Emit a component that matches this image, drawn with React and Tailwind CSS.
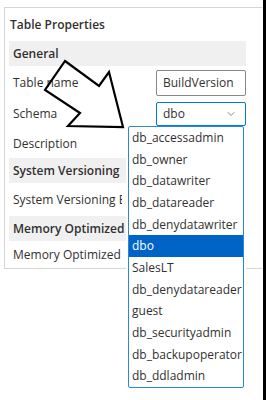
import { ChevronDown } from "lucide-react";

const schemas = [
  "db_accessadmin",
  "db_owner",
  "db_datawriter",
  "db_datareader",
  "db_denydatawriter",
  "dbo",
  "SalesLT",
  "db_denydatareader",
  "guest",
  "db_securityadmin",
  "db_backupoperator",
  "db_ddladmin",
];

function Section({ title }) {
  return (
    <div className="h-[25px] shrink-0 bg-[#f0f0f0] flex items-center pl-[4px] font-semibold text-[12px] text-[#323130]">
      {title}
    </div>
  );
}

function Row({ label, h, clip, children }) {
  return (
    <div className={"shrink-0 flex items-center justify-between pl-[4px] text-[12px] text-[#323130] " + h}>
      <span className={"whitespace-nowrap " + (clip ? "w-[109px] overflow-hidden" : "")}>{label}</span>
      {children}
    </div>
  );
}

export default function App() {
  return (
    <div className="relative w-[266px] h-[400px] bg-white overflow-hidden" style={{ fontFamily: '"Open Sans", "Noto Sans", sans-serif' }}>
      {/* right black edge */}
      <div className="absolute top-0 right-0 w-[3px] h-full bg-black" />

      {/* properties panel */}
      <div className="ml-[4px] mt-[7px] w-[258px] h-[262px] border-t border-l border-b border-[#d6d6d6] pl-[4px] flex flex-col">
        <div className="h-[33px] shrink-0 flex items-center pl-[1px] font-semibold text-[12px] text-[#323130]">Table Properties</div>
        <div className="w-[237px] flex flex-col">
          <Section title="General" />
          <Row label="Table name" h="h-[33px]">
            <div className="w-[90px] h-[26px] border border-[#8a8886] rounded-[2px] flex items-center px-[6px] text-[12px]">BuildVersion</div>
          </Row>
          <Row label="Schema" h="h-[30px]">
            <div className="w-[90px] h-[24px] border border-[#0078d4] rounded-[2px] flex items-center justify-between px-[6px] text-[12px]">
              dbo
              <ChevronDown size={12} strokeWidth={1.5} className="text-[#605e5c] mr-[2px]" />
            </div>
          </Row>
          <Row label="Description" h="h-[29px]" />
          <Section title="System Versioning" />
          <Row label="System Versioning Enabled" h="h-[33px]" clip />
          <Section title="Memory Optimized" />
          <Row label="Memory Optimized" h="h-[27px]" />
        </div>
      </div>

      {/* schema dropdown list */}
      <div className="absolute left-[126px] top-[126px] w-[120px] bg-white px-[2px]">
        <div className="border border-[#2b88d8] rounded-[2px] bg-white">
          {schemas.map((s) => (
            <div
              key={s}
              className={
                "h-[21.7px] flex items-center pl-[3px] text-[12px] whitespace-nowrap overflow-hidden " +
                (s === "dbo" ? "bg-[#0063c6] text-white" : "text-[#323130]")
              }
            >
              {s}
            </div>
          ))}
        </div>
      </div>

      {/* callout arrow */}
      <svg className="absolute left-0 top-0" width="266" height="400" viewBox="0 0 266 400" fill="none">
        <path
          d="M65 61 L99 86 L109 72 L123 127 L68 126 L80 113 L45 90 Z"
          stroke="black"
          strokeWidth="2.2"
          strokeLinejoin="miter"
        />
      </svg>
    </div>
  );
}
